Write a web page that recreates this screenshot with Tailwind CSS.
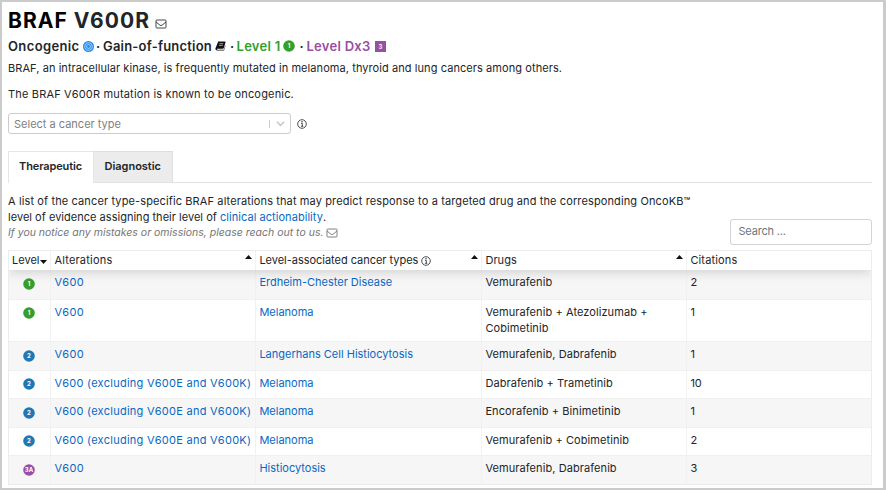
<!DOCTYPE html>
<html lang="en">
<head>
<meta charset="utf-8">
<title>BRAF V600R</title>
<script src="https://cdn.jsdelivr.net/npm/@tailwindcss/browser@4"></script>
</head>
<body class="bg-white">
<svg class="hidden">
  <symbol id="mail" viewBox="0 0 12 10"><rect x="1" y="1" width="10" height="8" rx=".8" fill="none" stroke="currentColor" stroke-width=".9"/><path d="M1 3 L5 6.2 Q6 6.9 7 6.2 L11 3" fill="none" stroke="currentColor" stroke-width=".9"/></symbol>
  <symbol id="info" viewBox="0 0 10 10"><circle cx="5" cy="5" r="4.3" fill="none" stroke="currentColor" stroke-width=".8"/><path d="M4 4.4H5.3V7.2M3.9 7.3H6.3" fill="none" stroke="currentColor" stroke-width=".8"/><circle cx="5" cy="2.8" r=".7" fill="currentColor"/></symbol>
</svg>
<div class="h-[490px] w-[886px] overflow-hidden border-2 border-r-[3px] border-[#cbcbcb] bg-white pl-[6px] font-['Inter','Liberation_Sans',sans-serif] text-[11px] leading-4 text-[#212529]">
  <div class="w-[864px]">
    <h1 class="flex h-[34px] items-center whitespace-pre pt-[4px] text-[21px] font-bold tracking-[1.04px]"><span class="text-black">BRAF</span><span> V600R</span><svg class="ml-[5px] mt-[6px] h-[10px] w-[12px] text-[#333]"><use href="#mail"/></svg></h1>

    <div class="flex h-[19px] items-center whitespace-nowrap text-[13px] font-semibold">
      <span class="w-[75px] tracking-[.37px]">Oncogenic</span>
      <svg class="mt-[1px] h-[11px] w-[11px]" viewBox="0 0 11 11" fill="none" stroke="#1e88f5"><circle cx="5.5" cy="5.5" r="4.9" fill="#9fcdfb" stroke-width="1.2"/><circle cx="5.5" cy="5.5" r="2.9" stroke-width="1"/><circle cx="5.5" cy="5.5" r="1.4" fill="#1e88f5" stroke="none"/></svg>
      <span class="w-[9px] pl-[2px]">·</span>
      <span class="w-[112px] tracking-[.2px]">Gain-of-function</span>
      <svg class="mt-[1px] h-[10px] w-[11px]" viewBox="0 0 11 10"><path d="M3.2 .6 H9.9 Q10.8 .6 10.5 1.5 L8.8 7 Q8.6 7.7 7.9 7.7 H2.1 Q1.4 8.5 2.4 8.7 H8.8 L10.4 4 V5.2 L9 9.5 H1.8 Q.2 9.3 .4 7.6 Z" fill="#111"/><path d="M4.4 2.7H8.2M3.9 4.4H7.7" stroke="#bbb" stroke-width=".8"/></svg>
      <span class="w-[10.5px] pl-[4px]">·</span>
      <span class="w-[46px] tracking-[.28px] text-[#33a02c]">Level 1</span>
      <svg class="mt-[1px] h-[12px] w-[12px]" viewBox="0 0 12 12"><circle cx="6" cy="6" r="5.8" fill="#33a02c"/><text x="6" y="8.2" text-anchor="middle" font-size="6" font-weight="700" fill="#fff">1</text></svg>
      <span class="w-[12px] pl-[5px]">·</span>
      <span class="w-[68.5px] tracking-[.27px] text-[#984ea3]">Level Dx3</span>
      <svg class="mt-[1px] h-[11px] w-[11px]" viewBox="0 0 11 11"><rect width="11" height="11" fill="#984ea3"/><text x="5.5" y="7.8" text-anchor="middle" font-size="6" font-weight="600" fill="#fff">3</text></svg>
    </div>

    <p class="mt-[5px] whitespace-nowrap tracking-[.075px]">BRAF, an intracellular kinase, is frequently mutated in melanoma, thyroid and lung cancers among others.</p>
    <p class="mt-[10px] whitespace-nowrap tracking-[.17px]">The BRAF V600R mutation is known to be oncogenic.</p>

    <div class="mt-[11px] flex h-[21px] items-center">
      <div class="flex h-[21px] w-[283px] items-center rounded-[3px] border border-[#ccc] pl-[5px] text-[#808080]">
        <span class="flex-1">Select a cancer type</span>
        <span class="h-[8px] w-px bg-[#ccc]"></span>
        <svg class="ml-[6px] mr-[5px] h-[9px] w-[9px]" viewBox="0 0 9 9" fill="none" stroke="#c4c4c4" stroke-width="1.4"><path d="M1 2.8 L4.5 6.4 L8 2.8"/></svg>
      </div>
      <svg class="ml-[6px] mt-[1px] h-[10px] w-[10px] text-[#222]"><use href="#info"/></svg>
    </div>

    <div class="mt-[17px] flex h-[32px] border-b border-[#dee2e6] font-semibold">
      <div class="-mb-px w-[86px] border-x border-t border-[#e6e6e6] bg-white pl-[10px] pt-[6px] tracking-[-.12px]">Therapeutic</div>
      <div class="w-[79px] border-r border-t border-[#dedede] bg-[#ececec] pl-[10.5px] pt-[6px] tracking-[-.02px]">Diagnostic</div>
    </div>

    <div class="flex h-[67px] justify-between">
      <div class="whitespace-nowrap pt-[10px]">
        <p class="w-[700px] tracking-[.12px]">A list of the cancer type-specific BRAF alterations that may predict response to a targeted drug and the corresponding OncoKB™</p>
        <p class="tracking-[.02px]">level of evidence assigning their level of <a class="tracking-[.05px] text-[#0968c3]">clinical actionability</a>.</p>
        <p class="flex items-center text-[10.5px] italic text-[#757575]">If you notice any mistakes or omissions, please reach out to us.<svg class="ml-[3px] h-[10px] w-[12px]"><use href="#mail"/></svg></p>
      </div>
      <div class="mt-[36px] h-[26px] w-[142px] shrink-0 rounded-[3px] border border-[#ced4da] pl-[7.5px] leading-[23px] tracking-[-.2px] text-[#6c757d]">Search ...</div>
    </div>

    <div class="border border-[#ececec]">
      <div class="relative z-10 grid h-[19px] grid-cols-[42px_205px_226px_205px_1fr] whitespace-nowrap bg-white leading-[18px] shadow-[0_2px_12px_0_rgba(0,0,0,0.16)] [clip-path:inset(0_0_-14px_0)]">
        <div class="flex border-r border-[#f2f2f2] pl-[3px]">Level<svg class="ml-[1px] mt-[9px] h-[4px] w-[7px]" viewBox="0 0 7 4"><path d="M0 0H7L3.5 4Z" fill="#111"/></svg></div>
        <div class="flex justify-between border-r border-[#f2f2f2] pl-[3.4px] pr-[3px] tracking-[.2px]">Alterations<svg class="mt-[4px] h-[4px] w-[7px]" viewBox="0 0 7 4"><path d="M0 4H7L3.5 0Z" fill="#111"/></svg></div>
        <div class="flex border-r border-[#f2f2f2] pl-[3.4px] pr-[3px] tracking-[-.025px]">Level-associated cancer types<svg class="ml-[3px] mt-[5px] h-[10px] w-[10px]"><use href="#info"/></svg><svg class="ml-auto mt-[4px] h-[4px] w-[7px]" viewBox="0 0 7 4"><path d="M0 4H7L3.5 0Z" fill="#111"/></svg></div>
        <div class="flex justify-between border-r border-[#f2f2f2] pl-[3.4px] pr-[3px] tracking-[.07px]">Drugs<svg class="mt-[4px] h-[4px] w-[7px]" viewBox="0 0 7 4"><path d="M0 4H7L3.5 0Z" fill="#111"/></svg></div>
        <div class="pl-[3.4px] tracking-[.14px]">Citations</div>
      </div>
      <div id="rows"></div>
    </div>
  </div>
</div>
<script>
const colors = {'1': '#33a02c', '2': '#1f78b4', '3A': '#984ea3'};
const v = ['V600', 'tracking-[.4px]'];
const ex = ['V600 (excluding V600E and V600K)', 'tracking-[.27px]'];
const rows = [
  ['1', v, 'Erdheim-Chester Disease', 'Vemurafenib', '2', 'h-[28.5px]'],
  ['1', v, 'Melanoma', 'Vemurafenib + Atezolizumab + Cobimetinib', '1', 'h-[42.5px]'],
  ['2', v, 'Langerhans Cell Histiocytosis', 'Vemurafenib, Dabrafenib', '1', 'h-[28.5px]'],
  ['2', ex, 'Melanoma', 'Dabrafenib + Trametinib', '10', 'h-[28.5px]'],
  ['2', ex, 'Melanoma', 'Encorafenib + Binimetinib', '1', 'h-[28.5px]'],
  ['2', ex, 'Melanoma', 'Vemurafenib + Cobimetinib', '2', 'h-[28.5px]'],
  ['3A', v, 'Histiocytosis', 'Vemurafenib, Dabrafenib', '3', 'h-[29px]']
];
document.getElementById('rows').innerHTML = rows.map(([l, a, c, d, n, h], i) => `
<div class="grid grid-cols-[42px_205px_226px_205px_1fr] *:pt-[4px] ${h} ${i % 2 ? 'bg-white' : 'bg-[#f6f6f6]'} ${i ? 'border-t border-[#f0f0f0]' : ''}">
  <div class="border-r border-[#f1f1f1]"><svg class="ml-[14px] mt-[3.5px] h-[12px] w-[12px]" viewBox="0 0 12 12"><circle cx="6" cy="6" r="5.8" fill="${colors[l]}"/><text x="6" y="8.1" text-anchor="middle" font-size="6" font-weight="700" fill="#fff">${l}</text></svg></div>
  <div class="whitespace-nowrap border-r border-[#f1f1f1] pl-[3.4px] text-[#0968c3] ${a[1]}">${a[0]}</div>
  <div class="whitespace-nowrap border-r border-[#f1f1f1] pl-[3.4px] text-[#0968c3]">${c}</div>
  <div class="border-r border-[#f1f1f1] pl-[3.4px] pr-[30px] tracking-[.08px]">${d}</div>
  <div class="pl-[3.4px]">${n}</div>
</div>`).join('');
</script>
</body>
</html>
